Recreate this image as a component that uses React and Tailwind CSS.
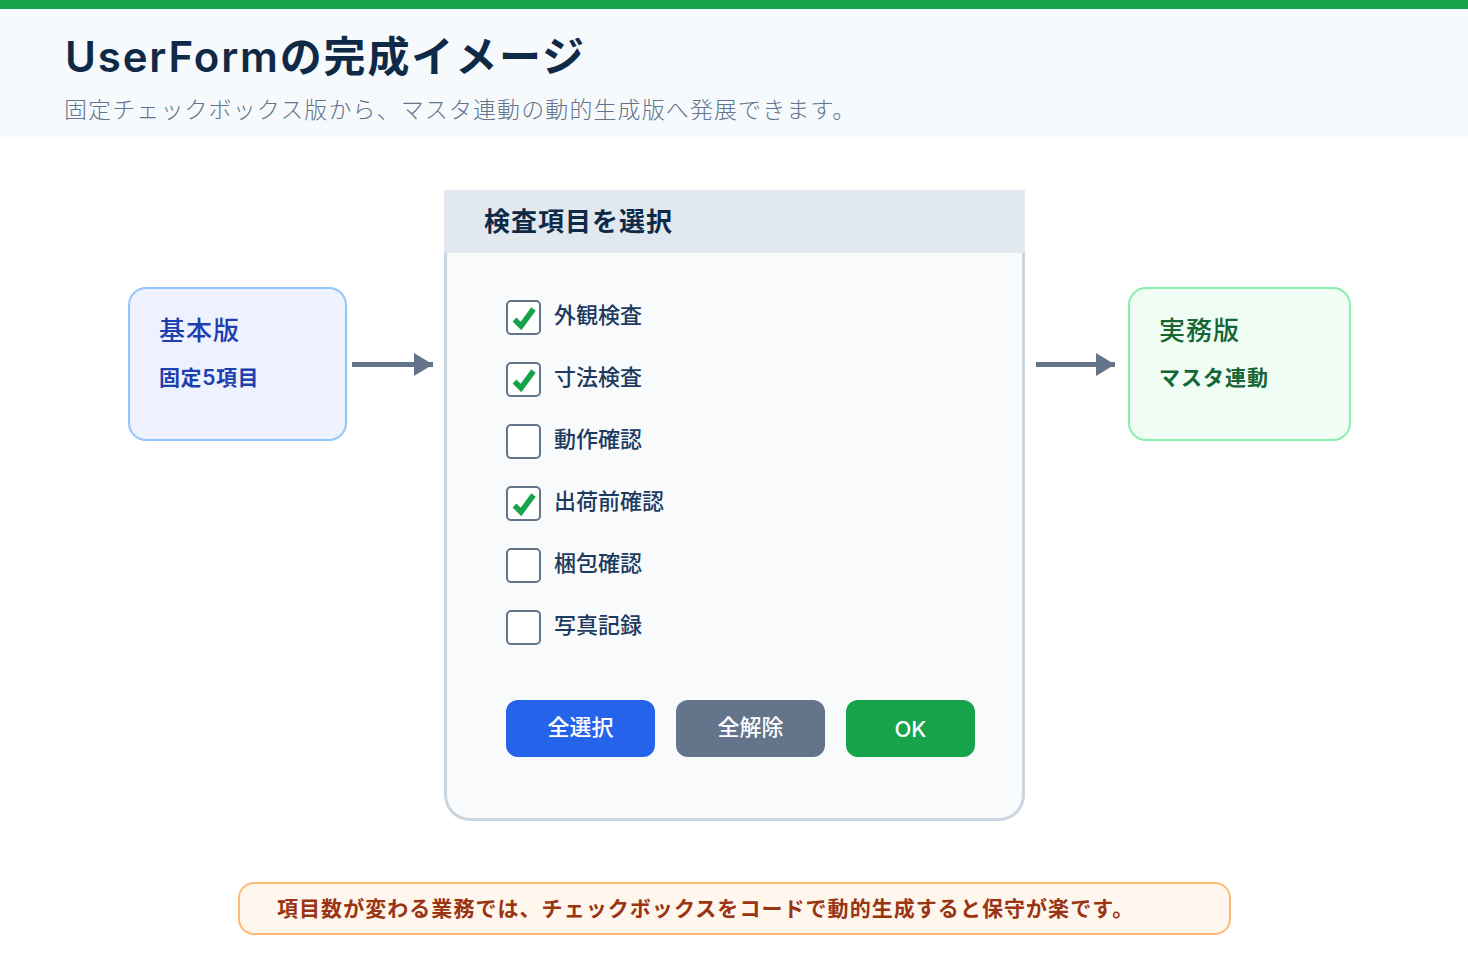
const font = { fontFamily: '"Inter", "Noto Sans CJK JP", sans-serif' }

const items = [
  { label: "外観検査", checked: true },
  { label: "寸法検査", checked: true },
  { label: "動作確認", checked: false },
  { label: "出荷前確認", checked: true },
  { label: "梱包確認", checked: false },
  { label: "写真記録", checked: false },
]

function Arrow({ width }) {
  return (
    <svg width={width} height="25" viewBox={`0 0 ${width} 25`} className="block">
      <rect x="0" y="10" width={width} height="5" fill="#64748b" />
      <path d={`M${width - 19} 1 L${width} 12.5 L${width - 19} 24 Z`} fill="#64748b" />
    </svg>
  )
}

function CheckRow({ label, checked }) {
  return (
    <div className="flex h-[62px] items-start">
      <div className="mt-[10px] flex h-[35px] w-[35px] items-center justify-center rounded-[5px] border-2 border-[#64748b] bg-white">
        {checked && (
          <svg width="31" height="31" viewBox="0 0 31 31">
            <path d="M6.5 17.5 L13 24 L25.5 7" fill="none" stroke="#16a34a" strokeWidth="5.5" />
          </svg>
        )}
      </div>
      <span className="ml-[13px] mt-[9px] text-[22px] leading-[32px] font-medium text-[#1e3a5f]">{label}</span>
    </div>
  )
}

function SideCard({ title, sub, className, titleColor, subClass }) {
  return (
    <div className={`h-[154px] rounded-[18px] border-2 pl-[29px] pt-[24px] ${className}`}>
      <div className={`text-[26px] leading-[36px] font-medium tracking-[1px] ${titleColor}`}>{title}</div>
      <div className={`mt-[14px] text-[21px] leading-[30px] font-semibold ${subClass} ${titleColor}`}>{sub}</div>
    </div>
  )
}

export default function App() {
  return (
    <div style={font} className="h-[980px] w-[1468px] overflow-hidden bg-white">
      <div className="h-[9px] bg-[#16a34a]" />
      <header className="h-[128px] bg-[#f7fafd] pl-[65px] pt-[19px]">
        <h1 className="text-[42px] leading-[58px] font-semibold tracking-[1.85px] text-[#0f2a47]">UserFormの完成イメージ</h1>
        <p className="-ml-[1px] mt-[8px] text-[23px] leading-[32px] font-light tracking-[1.1px] text-[#64748b]">
          固定チェックボックス版から、マスタ連動の動的生成版へ発展できます。
        </p>
      </header>

      <main className="flex items-start pl-[128px] pt-[53px]">
        <SideCard title="基本版" sub="固定5項目" titleColor="text-[#1e40af]" subClass="tracking-[0.6px]" className="mt-[97px] w-[219px] border-[#93c5fd] bg-[#eef2ff]" />
        <div className="ml-[5px] mt-[162px]"><Arrow width={81} /></div>
        <section className="ml-[11px] w-[581px]">
          <div className="h-[63px] bg-[#e2e8f0] pl-[40px] pt-[13px] text-[26px] leading-[38px] font-semibold tracking-[1px] text-[#0f2a47]">
            検査項目を選択
          </div>
          <div className="h-[568px] rounded-b-[26px] border-x-[3px] border-b-[3px] border-[#cbd5e1] bg-[#f8fafc] pl-[59px] pt-[37px]">
            {items.map((item) => (
              <CheckRow key={item.label} {...item} />
            ))}
            <div className="mt-[38px] flex gap-[21px]">
              <button className="h-[57px] w-[149px] rounded-[12px] bg-[#2563eb] pb-[2px] text-[22px] font-medium text-white">全選択</button>
              <button className="h-[57px] w-[149px] rounded-[12px] bg-[#64748b] pb-[2px] text-[22px] font-medium text-white">全解除</button>
              <button className="h-[57px] w-[129px] rounded-[12px] bg-[#16a34a] pt-[2px] text-[22px] font-medium text-white">OK</button>
            </div>
          </div>
        </section>
        <div className="ml-[11px] mt-[162px]"><Arrow width={79} /></div>
        <SideCard title="実務版" sub="マスタ連動" titleColor="text-[#166534]" subClass="tracking-[1px]" className="ml-[13px] mt-[97px] w-[223px] border-[#86efac] bg-[#f0fdf4]" />
      </main>

      <div className="ml-[238px] mt-[61px] h-[53px] w-[993px] rounded-[16px] border-2 border-[#fdba74] bg-[#fff7ed] pl-[37px] text-[21px] leading-[49px] font-semibold tracking-[1.05px] text-[#9a3412]">
        項目数が変わる業務では、チェックボックスをコードで動的生成すると保守が楽です。
      </div>
    </div>
  )
}
